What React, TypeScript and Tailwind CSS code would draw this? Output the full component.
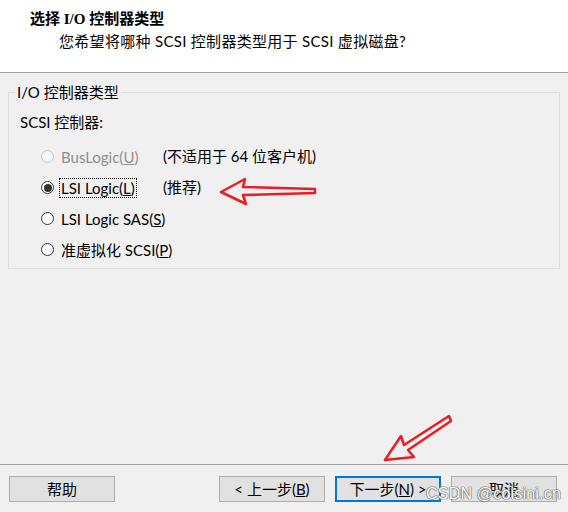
import type { ReactNode } from "react";

const ui = "font-['Lato','Noto_Sans_CJK_SC',sans-serif]";

function Radio({ checked, disabled }: { checked?: boolean; disabled?: boolean }) {
    return (
        <span
            className={`flex h-[13px] w-[13px] shrink-0 items-center justify-center rounded-full border ${
                disabled ? "border-[#c4c4c4] bg-[#f7f7f7]" : "border-[#333333] bg-white"
            }`}
        >
            {checked && <span className="h-[8px] w-[8px] rounded-full bg-[#333333]" />}
        </span>
    );
}

function Option({ children, note, checked, disabled, focus }: {
    children: ReactNode
    note?: string
    checked?: boolean
    disabled?: boolean
    focus?: boolean
}) {
    return (
        <div className="flex h-[31px] items-center whitespace-nowrap">
            <div className="ml-[21px] flex w-[122px] items-center">
                <Radio checked={checked} disabled={disabled} />
                <span
                    className={`ml-[5px] px-[1px] leading-[18px] ${disabled ? "text-[#8f8f8f]" : "text-black"} ${
                        focus ? "border border-dotted border-black" : "border border-transparent"
                    }`}
                >
                    {children}
                </span>
            </div>
            {note && <span className="text-black">{note}</span>}
        </div>
    );
}

function Button({ children, primary }: { children: ReactNode; primary?: boolean }) {
    return (
        <button
            className={`flex h-[26px] w-[106px] items-center justify-center whitespace-nowrap bg-[#e1e1e1] text-[15px] text-black ${
                primary ? "border-2 border-[#0078d7]" : "border border-[#adadad]"
            }`}
        >
            {children}
        </button>
    );
}

export default function App() {
    return (
        <div className={`relative flex h-[512px] w-[568px] flex-col overflow-hidden bg-[#f0f0f0] ${ui} text-[15px]`}>
            {/* header */}
            <div className="h-[73px] shrink-0 border-b border-[#a0a0a0] bg-white">
                <div className="pl-[30px] pt-[9px] font-['Liberation_Serif','Noto_Sans_CJK_SC',serif] text-[15px] font-bold leading-[20px] text-black">
                    选择 I/O 控制器类型
                </div>
                <div className="pl-[59px] pt-[2px] text-[15px] leading-[20px] tracking-[0.3px] text-black">
                    您希望将哪种 SCSI 控制器类型用于 SCSI 虚拟磁盘?
                </div>
            </div>

            {/* body */}
            <div className="flex-1 px-[8px] pt-[9px]">
                <fieldset className="border border-[#dcdcdc] pb-[3px] pl-[11px]">
                    <legend className="-ml-[5px] px-[2px] leading-[20px] text-black">I/O 控制器类型</legend>
                    <div className="mt-[10px] h-[20px] leading-[20px] text-black">SCSI 控制器:</div>
                    <div className="mt-[9px]">
                        <Option disabled note="(不适用于 64 位客户机)">
                            BusLogic(<span className="underline">U</span>)
                        </Option>
                        <Option checked focus note="(推荐)">
                            LSI Logic(<span className="underline">L</span>)
                        </Option>
                        <Option>
                            LSI Logic SAS(<span className="underline">S</span>)
                        </Option>
                        <Option>
                            准虚拟化 SCSI(<span className="underline">P</span>)
                        </Option>
                    </div>
                </fieldset>
            </div>

            {/* footer */}
            <div className="flex h-[48px] shrink-0 items-start border-t border-[#a0a0a0] px-[9px] pt-[11px]">
                <Button>帮助</Button>
                <div className="ml-auto flex gap-[10px] pr-[2px]">
                    <Button>&lt; 上一步(<span className="underline">B</span>)</Button>
                    <Button primary>下一步(<span className="underline">N</span>) &gt;</Button>
                    <Button>取消</Button>
                </div>
            </div>

            {/* annotation arrows */}
            <svg className="pointer-events-none absolute left-0 top-0" width="568" height="512">
                <polygon
                    points="221,192 245,179 243,187 315,189 315,193 243,195 246,204"
                    fill="none"
                    stroke="#ec1c24"
                    strokeWidth="2.5"
                    strokeLinejoin="round"
                />
                <polygon
                    points="385,460 401,436 404,445 449,416 451,421 408,450 414,457"
                    fill="none"
                    stroke="#ec1c24"
                    strokeWidth="2.5"
                    strokeLinejoin="round"
                />
            </svg>

            {/* watermark */}
            <div className="pointer-events-none absolute left-[426px] top-[484px] font-['Liberation_Sans',sans-serif] text-[16px] leading-[20px] tracking-[0.2px] text-white [text-shadow:0_0_1px_#666,0_0_1px_#666,0_0_1px_#666,0_0_1px_#666]">
                CSDN @coisini.cn
            </div>
        </div>
    );
}
